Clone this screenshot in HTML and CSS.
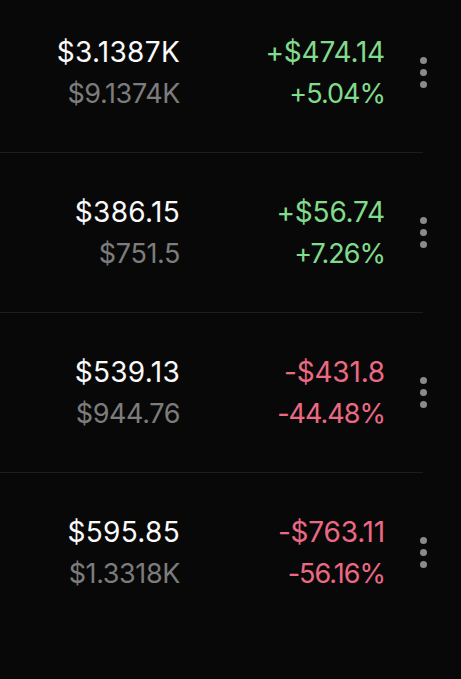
FILE: index.html
```html
<!DOCTYPE html>
<html lang="en">
<head>
    <meta charset="UTF-8">
    <meta name="viewport" content="width=device-width, initial-scale=1.0">
    <title>Holdings</title>
    <link rel="stylesheet" href="styles.css">
</head>
<body>
    <div class="list">
        <div class="row">
            <div class="value">
                <span class="main">$3.1387K</span>
                <span class="sub">$9.1374K</span>
            </div>
            <div class="change up">
                <span class="main">+$474.14</span>
                <span class="sub">+5.04%</span>
            </div>
            <div class="more"><i></i><i></i><i></i></div>
        </div>
        <div class="row">
            <div class="value">
                <span class="main">$386.15</span>
                <span class="sub">$751.5</span>
            </div>
            <div class="change up">
                <span class="main">+$56.74</span>
                <span class="sub">+7.26%</span>
            </div>
            <div class="more"><i></i><i></i><i></i></div>
        </div>
        <div class="row">
            <div class="value">
                <span class="main">$539.13</span>
                <span class="sub">$944.76</span>
            </div>
            <div class="change down">
                <span class="main">-$431.8</span>
                <span class="sub">-44.48%</span>
            </div>
            <div class="more"><i></i><i></i><i></i></div>
        </div>
        <div class="row last">
            <div class="value">
                <span class="main">$595.85</span>
                <span class="sub">$1.3318K</span>
            </div>
            <div class="change down">
                <span class="main">-$763.11</span>
                <span class="sub">-56.16%</span>
            </div>
            <div class="more"><i></i><i></i><i></i></div>
        </div>
    </div>
</body>
</html>
```

FILE: styles.css
```css
body {
    margin: 0;
    background: #080808;
    font-family: Inter, "Liberation Sans", sans-serif;
    overflow: hidden;
}
.list {
    margin-top: -7px;
}
.row {
    display: grid;
    grid-template-columns: 180px 205px 1fr;
    align-items: center;
    height: 159px;
    width: 423px;
    border-bottom: 1px solid #1d1d1d;
}
.row.last { border-bottom: none; }
.value, .change {
    display: flex;
    flex-direction: column;
    align-items: flex-end;
}
.main {
    font-size: 28px;
    line-height: 42px;
    letter-spacing: 0.3px;
    color: #fafafa;
}
.change .main { letter-spacing: -0.2px; }
.sub {
    font-size: 27px;
    line-height: 42px;
    letter-spacing: -0.4px;
    color: #7c7c7c;
}
.change .sub { letter-spacing: -1px; }
.up .main, .up .sub { color: #80dc8c; }
.down .main, .down .sub { color: #ec6984; }
.more {
    display: flex;
    flex-direction: column;
    align-items: center;
    gap: 5px;
    width: 76px;
}
.more i {
    display: block;
    width: 7px;
    height: 7px;
    border-radius: 50%;
    background: #8a8a8a;
}
```
